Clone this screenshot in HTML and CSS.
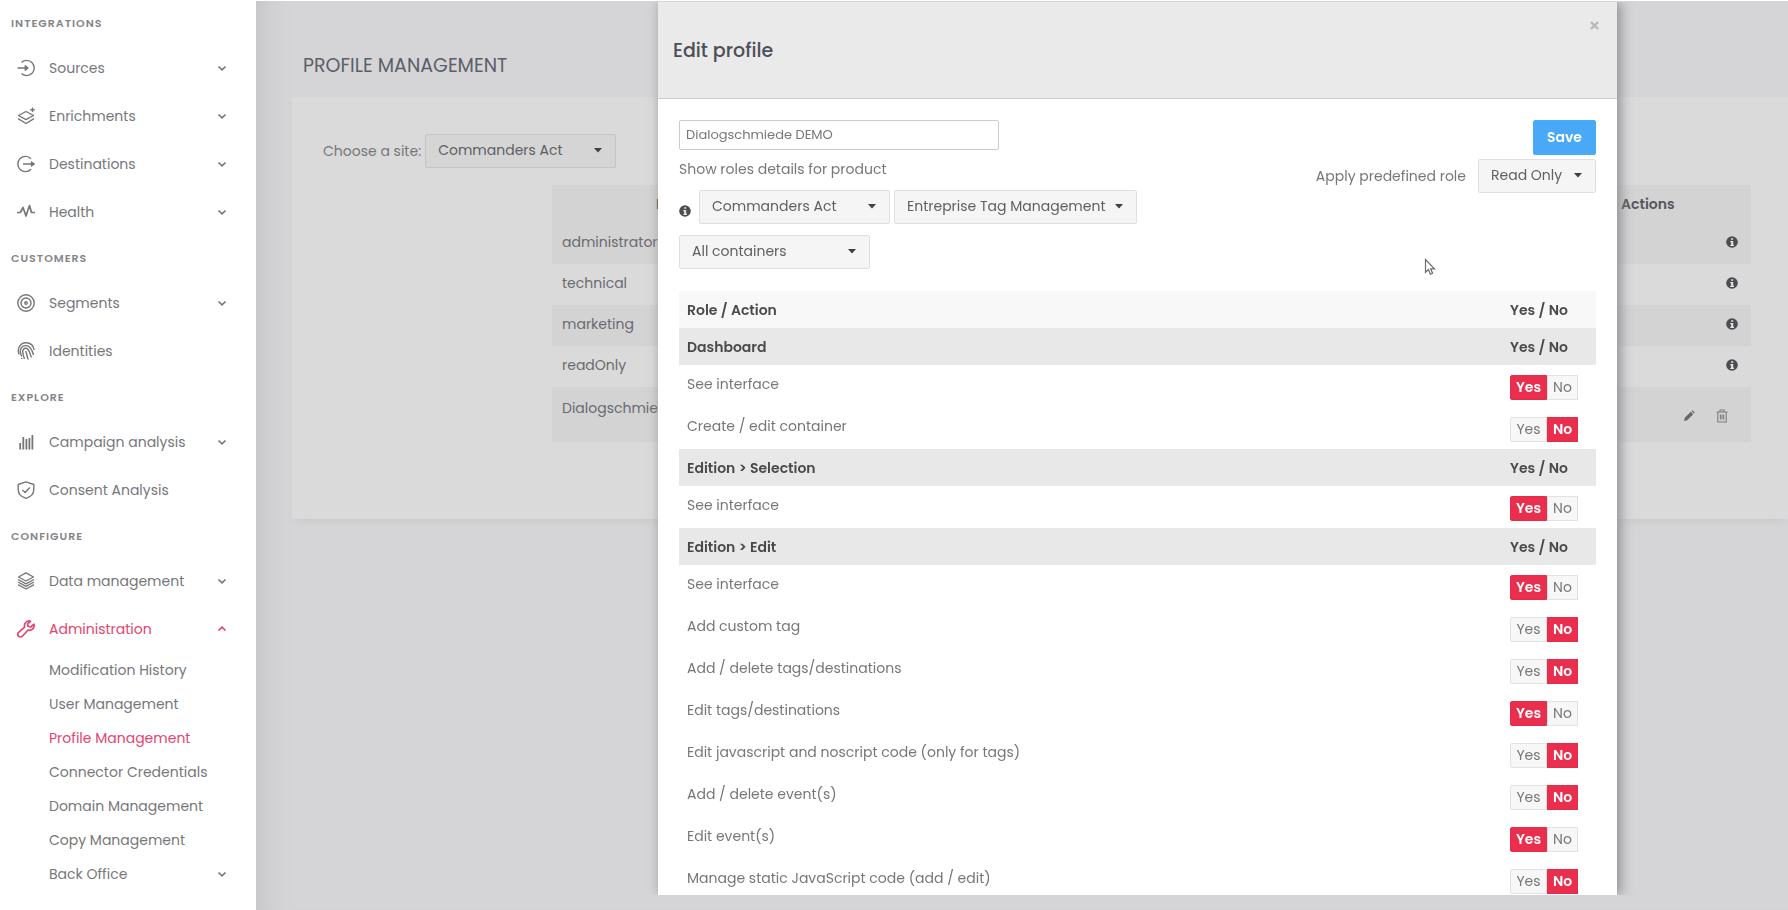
FILE: index.html
```html
<!DOCTYPE html>
<html lang="en">
<head>
<meta charset="utf-8">
<title>Profile Management</title>
<link rel="stylesheet" href="styles.css">
</head>
<body>
<svg class="defs" aria-hidden="true">
  <symbol id="chevron" viewBox="0 0 10 10"><path d="M1.500 3.500 5 6.800 8.500 3.500" fill="none" stroke="currentColor" stroke-width="1.700"/></symbol>
  <symbol id="info" viewBox="0 0 14 14"><circle cx="7" cy="7" r="6.800" fill="currentColor"/><path d="M6 2.500h2.400v2H6zM5 5.800h3.400v4.300h.9v1.500H5v-1.500h1V7.200H5z" fill="#e4e4e4"/></symbol>
  <symbol id="caret" viewBox="0 0 8 5"><path d="M0 0h8L4 4.600z" fill="currentColor"/></symbol>
</svg>
<div class="app">
  <nav class="sidebar" aria-label="Main">
    <section class="group">
      <h2 class="group-title">INTEGRATIONS</h2>
      <a class="item" href="#"><svg class="icon" viewBox="0 0 18 18"><path d="M4.500 3.400A7.600 7.600 0 1 1 4.500 14.600M.5 9h10.300M8.300 6.800 11 9l-2.700 2.200z"/></svg><span>Sources</span><svg class="chev"><use href="#chevron"/></svg></a>
      <a class="item" href="#"><svg class="icon" viewBox="0 0 18 18"><path d="M9 4.500 1.500 8.500 9 12.600l7.500-4.100zM1 11.700l8 4.800 8-4.800M15.500.500v4.600M13.200 2.800h4.600"/></svg><span>Enrichments</span><svg class="chev"><use href="#chevron"/></svg></a>
      <a class="item" href="#"><svg class="icon" viewBox="0 0 18 18"><path d="M14 3.800a7.600 7.600 0 1 0 0 10.400M6 9h11M14.500 7 17.300 9l-2.800 2z"/></svg><span>Destinations</span><svg class="chev"><use href="#chevron"/></svg></a>
      <a class="item" href="#"><svg class="icon" viewBox="0 0 18 18"><path stroke-width="1.700" d="M0 9.500h3.300L6 4.500l3 8.500 3.500-10.500L14.500 9.500H18"/></svg><span>Health</span><svg class="chev"><use href="#chevron"/></svg></a>
    </section>
    <section class="group">
      <h2 class="group-title">CUSTOMERS</h2>
      <a class="item" href="#"><svg class="icon" viewBox="0 0 18 18"><circle cx="9" cy="9" r="8.200"/><circle cx="9" cy="9" r="5"/><circle cx="9" cy="9" r="1.200"/></svg><span>Segments</span><svg class="chev"><use href="#chevron"/></svg></a>
      <a class="item" href="#"><svg class="icon" viewBox="0 0 18 18"><path d="M2.200 12.500C-.5 6.500 3.500.800 9 .800c4.500 0 7.500 3 8.200 7.200M4.800 14.500C2 9 3.500 3.600 8.700 3.600c5 0 6.800 5.400 7.800 9.400M7.500 17C5.500 12 4.500 6.300 8.800 6.300c3.700 0 3.700 5.200 5.700 9.200M11.200 17.500C10 14.500 9.700 12 8.800 9M4.700 17v-1"/></svg><span>Identities</span></a>
    </section>
    <section class="group">
      <h2 class="group-title">EXPLORE</h2>
      <a class="item" href="#"><svg class="icon" viewBox="0 0 18 18"><path d="M3.200 16.500V10M6.300 16.500V4M9.400 16.500V6M12.400 16.500V5M15.400 16.500V2" stroke-width="1.800"/></svg><span>Campaign analysis</span><svg class="chev"><use href="#chevron"/></svg></a>
      <a class="item" href="#"><svg class="icon" viewBox="0 0 18 18"><path d="M9 .800 16.800 3.500v5C16.800 13 13.500 16 9 17.300 4.500 16 1.200 13 1.200 8.500v-5zM5.500 9l2.600 2.500L12.800 6.500"/></svg><span>Consent Analysis</span></a>
    </section>
    <section class="group">
      <h2 class="group-title">CONFIGURE</h2>
      <a class="item" href="#"><svg class="icon" viewBox="0 0 18 18"><path d="M9 .800 1.500 5 9 9l7.500-4zM1 7.500l8 4.300 8-4.300M1 10l8 4.300 8-4.300M1 12.700 9 17l8-4.300"/></svg><span>Data management</span><svg class="chev"><use href="#chevron"/></svg></a>
      <a class="item active" href="#"><svg class="icon" viewBox="0 0 18 18"><path stroke-width="1.700" d="M13.600 1.200C10 .200 6.600 3 7.600 7.200L1.600 12.400a2.500 2.500 0 0 0 3.800 3.800l5.400-6c4.200.900 7-2.500 6.100-6L13.800 7 11 6.300l-.3-2.500z"/></svg><span>Administration</span><svg class="chev up"><use href="#chevron"/></svg></a>
      <div class="subnav">
        <a class="sub" href="#">Modification History</a>
        <a class="sub" href="#">User Management</a>
        <a class="sub active" href="#">Profile Management</a>
        <a class="sub" href="#">Connector Credentials</a>
        <a class="sub" href="#">Domain Management</a>
        <a class="sub" href="#">Copy Management</a>
        <a class="sub" href="#"><span>Back Office</span><svg class="chev"><use href="#chevron"/></svg></a>
      </div>
    </section>
  </nav>

  <main class="main">
    <header class="page-head"><h1 class="page-title">PROFILE MANAGEMENT</h1></header>
    <div class="card">
      <div class="site">
        <label for="site">Choose a site:</label>
        <span class="select dim"><select id="site"><option>Commanders Act</option></select><svg class="caret"><use href="#caret"/></svg></span>
      </div>
      <table class="profiles">
        <thead><tr><th class="name-head">Name</th><th class="act-col">Actions</th></tr></thead>
        <tbody>
          <tr><td>administrator</td><td class="acts"><svg class="info"><use href="#info"/></svg></td></tr>
          <tr><td>technical</td><td class="acts"><svg class="info"><use href="#info"/></svg></td></tr>
          <tr><td>marketing</td><td class="acts"><svg class="info"><use href="#info"/></svg></td></tr>
          <tr><td>readOnly</td><td class="acts"><svg class="info"><use href="#info"/></svg></td></tr>
          <tr class="last"><td>Dialogschmiede DEMO</td><td class="acts"><div class="tools">
            <button class="tool" type="button" aria-label="Edit"><svg width="12" height="12" viewBox="0 0 12 12"><path d="M1 11l.8-3.200L7.800 1.800l2.400 2.400-6 6zM8.500 1.100l.9-.9 2.400 2.400-.9.900z" fill="#6b6668"/></svg></button>
            <button class="tool" type="button" aria-label="Delete"><svg width="12" height="14" viewBox="0 0 12 14"><path d="M.5 3h11M4 3V1h4v2M1.800 3v10h8.400V3M4.400 5.500v5M6 5.500v5M7.600 5.500v5" fill="none" stroke="#7f7f82" stroke-width="1.100"/></svg></button>
          </div></td></tr>
        </tbody>
      </table>
    </div>
  </main>
</div>

<div class="overlay">
  <div class="modal" role="dialog" aria-labelledby="dlg-title">
    <header class="modal-head">
      <h2 class="modal-title" id="dlg-title">Edit profile</h2>
      <button class="close" type="button" aria-label="Close"><svg width="9" height="9" viewBox="0 0 9 9"><path d="M1 1l7 7M8 1 1 8" stroke="#b9b9b9" stroke-width="2.400"/></svg></button>
    </header>
    <div class="modal-body">
      <div class="form">
        <div class="form-left">
          <input class="name" type="text" value="Dialogschmiede DEMO" aria-label="Profile name">
          <label class="show" for="product">Show roles details for product</label>
          <div class="selects">
            <svg class="info"><use href="#info"/></svg>
            <span class="select"><select aria-label="Site"><option>Commanders Act</option></select><svg class="caret"><use href="#caret"/></svg></span>
            <span class="select wide"><select id="product"><option>Entreprise Tag Management</option></select><svg class="caret"><use href="#caret"/></svg></span>
          </div>
          <span class="select"><select aria-label="Containers"><option>All containers</option></select><svg class="caret"><use href="#caret"/></svg></span>
        </div>
        <div class="form-right">
          <button class="save" type="button">Save</button>
          <div class="role">
            <label for="role">Apply predefined role</label>
            <span class="select short"><select id="role"><option>Read Only</option></select><svg class="caret"><use href="#caret"/></svg></span>
          </div>
        </div>
      </div>
      <table class="roles">
        <thead><tr><th>Role / Action</th><th class="yn">Yes / No</th></tr></thead>
        <tbody>
          <tr class="sec"><th>Dashboard</th><th>Yes / No</th></tr>
          <tr><td>See interface</td><td><div class="toggle"><button class="on" type="button">Yes</button><button type="button">No</button></div></td></tr>
          <tr><td>Create / edit container</td><td><div class="toggle"><button type="button">Yes</button><button class="on" type="button">No</button></div></td></tr>
          <tr class="sec"><th>Edition &gt; Selection</th><th>Yes / No</th></tr>
          <tr><td>See interface</td><td><div class="toggle"><button class="on" type="button">Yes</button><button type="button">No</button></div></td></tr>
          <tr class="sec"><th>Edition &gt; Edit</th><th>Yes / No</th></tr>
          <tr><td>See interface</td><td><div class="toggle"><button class="on" type="button">Yes</button><button type="button">No</button></div></td></tr>
          <tr><td>Add custom tag</td><td><div class="toggle"><button type="button">Yes</button><button class="on" type="button">No</button></div></td></tr>
          <tr><td>Add / delete tags/destinations</td><td><div class="toggle"><button type="button">Yes</button><button class="on" type="button">No</button></div></td></tr>
          <tr><td>Edit tags/destinations</td><td><div class="toggle"><button class="on" type="button">Yes</button><button type="button">No</button></div></td></tr>
          <tr><td>Edit javascript and noscript code (only for tags)</td><td><div class="toggle"><button type="button">Yes</button><button class="on" type="button">No</button></div></td></tr>
          <tr><td>Add / delete event(s)</td><td><div class="toggle"><button type="button">Yes</button><button class="on" type="button">No</button></div></td></tr>
          <tr><td>Edit event(s)</td><td><div class="toggle"><button class="on" type="button">Yes</button><button type="button">No</button></div></td></tr>
          <tr><td>Manage static JavaScript code (add / edit)</td><td><div class="toggle"><button type="button">Yes</button><button class="on" type="button">No</button></div></td></tr>
        </tbody>
      </table>
    </div>
  </div>
</div>
<svg class="pointer" width="12" height="18" viewBox="0 0 12 18" aria-hidden="true"><path d="M1.500 1.500v12.800l2.900-2.700 2 4.600 2.200-.9-2-4.500h3.900z" fill="#fff" stroke="#6c6c6c" stroke-width="1.200"/></svg>
</body>
</html>
```
FILE: styles.css
```css
* { box-sizing: border-box; }

body {
  margin: 0;
  font-family: Poppins, Inter, "Open Sans", sans-serif;
  font-size: 14px;
  line-height: 20px;
  color: #77777a;
  background: #d5d5d7;
  overflow: hidden;
}

button, input, select { font: inherit; color: inherit; }
a { color: inherit; text-decoration: none; }
h1, h2 { margin: 0; }
.defs { position: absolute; width: 0; height: 0; }

.app { display: flex; height: 100vh; border-top: 1px solid #fff; }

/* Sidebar */
.sidebar { flex: none; width: 256px; padding-top: 1px; background: #fff; overflow: hidden; }
.group { padding-bottom: 1px; }
.group-title {
  padding-left: 11px;
  font-size: 11px;
  line-height: 42px;
  font-weight: 600;
  letter-spacing: 1px;
  color: #858588;
}
.item {
  display: flex;
  align-items: center;
  gap: 14px;
  height: 48px;
  padding: 0 29px 0 17px;
}
.icon { width: 18px; height: 18px; fill: none; stroke: currentColor; stroke-width: 1.4px; stroke-linejoin: round; }
.chev { width: 10px; height: 10px; margin-left: auto; }
.chev.up { transform: rotate(180deg); }
.sub { display: flex; align-items: center; height: 34px; padding: 0 29px 0 49px; }
.active { color: #e4456f; }

/* Page behind the dialog */
.main { flex: 1; min-width: 0; padding-left: 36px; box-shadow: inset 34px 0 30px -30px #bfbfc2; }
.page-head { display: flex; height: 96px; padding: 51px 11px 0; }
.page-title { font-size: 19px; line-height: 28px; font-weight: 400; color: #5c5f67; }
.card { height: 422px; padding: 37px 37px 0 31px; background: #dadadb; box-shadow: 0 6px 8px -3px #cbcbcd; }
.site { display: flex; align-items: center; gap: 4px; }
.profiles { width: calc(100% - 229px); margin: 17px 0 0 229px; border-collapse: collapse; background: #d3d3d4; color: #6a6a6f; }
.profiles th { height: 38px; padding: 0 6px; text-align: left; font-weight: 600; color: #55565a; }
.profiles td { height: 41px; padding: 0 10px 3px; vertical-align: middle; }
.profiles tr:nth-child(even) { background: #dadadb; }
.profiles .name-head { padding-left: 104px; }
.profiles .act-col { width: 136px; }
.profiles .acts { text-align: right; padding-right: 13px; line-height: 0; }
.profiles .last td { height: 55px; padding-bottom: 14px; }
.profiles .last .acts { padding: 2px 23px 0 0; }
.tools { display: flex; justify-content: flex-end; gap: 21px; }
.tool { display: flex; align-items: center; padding: 0; border: 0; background: none; }
.info { flex: none; width: 12px; height: 12px; color: #4c4d51; }

/* Select boxes */
.select { position: relative; display: block; width: 191px; height: 34px; }
.select select {
  width: 100%;
  height: 100%;
  padding: 0 12px 2px;
  border: 1px solid #dfdfe0;
  border-radius: 2px;
  background: #f5f5f6;
  color: #606064;
  appearance: none;
}
.select.dim select { background: #d5d5d6; border-color: #c4c4c5; }
.select.wide { width: 243px; }
.select.short { width: 118px; }
.caret { position: absolute; right: 14px; top: 14px; width: 8px; height: 5px; color: #3f3f42; pointer-events: none; }

/* Dialog */
.overlay { position: fixed; inset: 0; display: flex; padding: 2px 171px 15px 658px; }
.modal { flex: 1; min-width: 0; background: #fff; box-shadow: 3px 0 12px #88888b; clip-path: inset(0 -20px 0 -20px); display: flex; flex-direction: column; overflow: hidden; }
.modal-head { flex: none; display: flex; justify-content: space-between; align-items: flex-start; height: 97px; padding: 18px 17px 0 15px; background: #eaeaea; border-bottom: 1px solid #cdcdcd; }
.modal-title { padding-top: 17px; font-size: 19px; line-height: 28px; font-weight: 500; color: #4c4f57; }
.close { display: flex; padding: 1px; border: 0; background: none; }
.modal-body { padding: 21px 21px 0; }
.form { display: flex; justify-content: space-between; }
.form-left { display: flex; flex-direction: column; align-items: flex-start; }
.name { width: 320px; height: 30px; padding: 0 6px; border: 1px solid #ccc; border-radius: 2px; background: #fff; font-size: 13px; }
.show { margin: 9px 0 11px; }
.selects { display: flex; align-items: center; gap: 4px; margin-bottom: 11px; }
.selects .info { margin: 8px 4px 0 0; }
.form-right { display: flex; flex-direction: column; align-items: flex-end; gap: 4px; }
.save { width: 63px; height: 35px; padding: 0 0 2px; border: 1px solid #41b2fa; border-radius: 2px; background: #49a9f6; color: #fff; font-weight: 600; }
.role { display: flex; align-items: center; gap: 12px; }

.roles { width: 100%; margin-top: 22px; border-collapse: collapse; }
.roles th, .roles td { padding: 0 8px; text-align: left; }
.roles th { height: 37px; font-weight: 600; color: #4a4a4d; }
.roles thead th { height: 37px; background: #f8f8f8; }
.roles .sec { background: #e8e8e8; }
.roles td { height: 42px; padding-bottom: 4px; }
.roles td:last-child { padding: 2px 8px 0; }
.roles .yn { width: 94px; }
.toggle { display: flex; width: 68px; height: 25px; }
.toggle button { flex: 1 1 30px; padding: 0; border: 1px solid #e2e2e3; background: #f7f7f7; line-height: 22px; }
.toggle button:first-child { flex-basis: 36px; border-radius: 2px 0 0 2px; }
.toggle .on { border-color: #e62c4b; background: #ea2f4e; color: #fff; font-weight: 600; }

.pointer { position: fixed; left: 1424px; top: 258px; }
```
